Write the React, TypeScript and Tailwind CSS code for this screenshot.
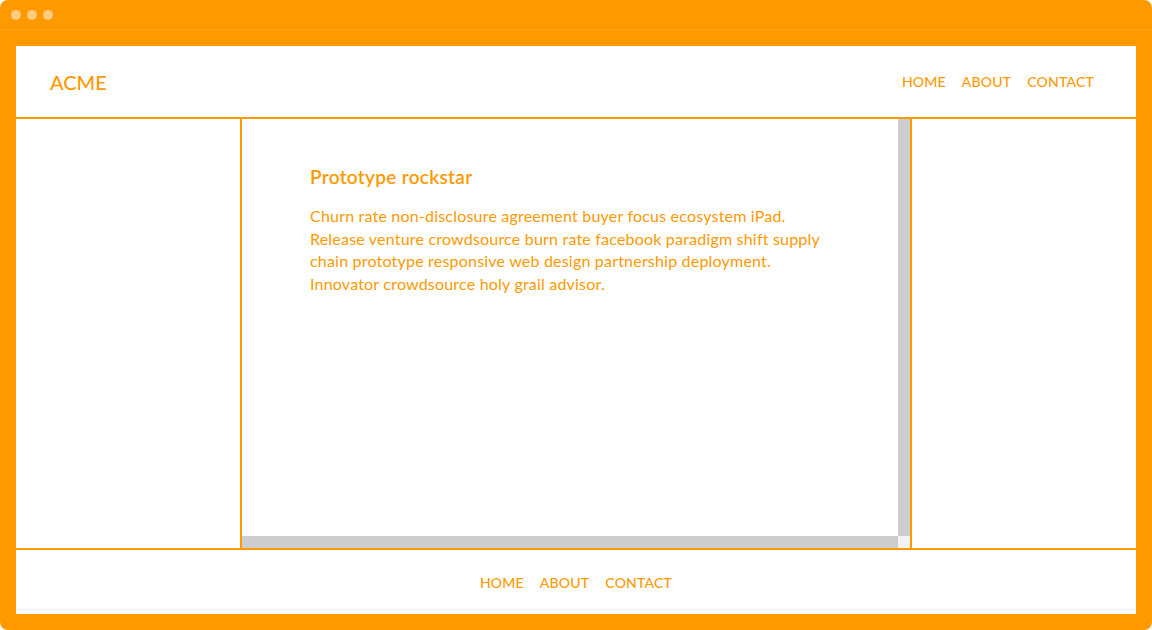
const navItems = ["HOME", "ABOUT", "CONTACT"];

function Nav({ className }: { className?: string }) {
  return (
    <nav className={`flex gap-4 text-[14px] font-medium tracking-[0.2px] text-[#ff9900] ${className ?? ""}`}>
      {navItems.map((item) => (
        <a key={item} href="#">
          {item}
        </a>
      ))}
    </nav>
  );
}

export default function App() {
  return (
    <div
      className="h-[630px] w-[1152px] overflow-hidden rounded-lg bg-[#ff9900]"
      style={{ fontFamily: "Lato, 'Liberation Sans', sans-serif" }}
    >
      {/* window chrome */}
      <div className="flex h-[30px] items-center gap-[6px] border-b border-[#ffa41f] pl-[11px]">
        <span className="h-[10px] w-[10px] rounded-full bg-[#ffcc80]" />
        <span className="h-[10px] w-[10px] rounded-full bg-[#ffcc80]" />
        <span className="h-[10px] w-[10px] rounded-full bg-[#ffcc80]" />
      </div>

      <div className="mx-4 mt-4 flex h-[568px] flex-col bg-white">
        <header className="flex h-[73px] shrink-0 items-center justify-between border-b-2 border-[#ff9900] pl-[34px] pr-[42px]">
          <span className="text-[20px] font-medium text-[#ff9900]">ACME</span>
          <Nav />
        </header>

        <main className="flex h-[429px] shrink-0">
          <aside className="w-[226px] shrink-0 border-r-2 border-[#ff9900]" />
          <div className="flex w-[670px] shrink-0 flex-col border-r-2 border-[#ff9900]">
            <div className="flex flex-1">
              <article className="flex-1 pl-[68px] pt-[46px] text-[#ff9900]">
                <h2 className="text-[19px] font-semibold leading-6 tracking-[0.3px]">Prototype rockstar</h2>
                <p className="mt-4 text-[16px] leading-[22.5px] tracking-[0.2px]">
                  Churn rate non-disclosure agreement buyer focus ecosystem iPad.
                  <br />
                  Release venture crowdsource burn rate facebook paradigm shift supply
                  <br />
                  chain prototype responsive web design partnership deployment.
                  <br />
                  Innovator crowdsource holy grail advisor.
                </p>
              </article>
              <div className="w-3 bg-[#cdcdcd]" />
            </div>
            <div className="flex h-3">
              <div className="flex-1 bg-[#cdcdcd]" />
              <div className="w-3 bg-[#f3f3f3]" />
            </div>
          </div>
          <aside className="flex-1" />
        </main>

        <footer className="flex flex-1 items-center justify-center border-t-2 border-[#ff9900]">
          <Nav />
        </footer>
      </div>
    </div>
  );
}
